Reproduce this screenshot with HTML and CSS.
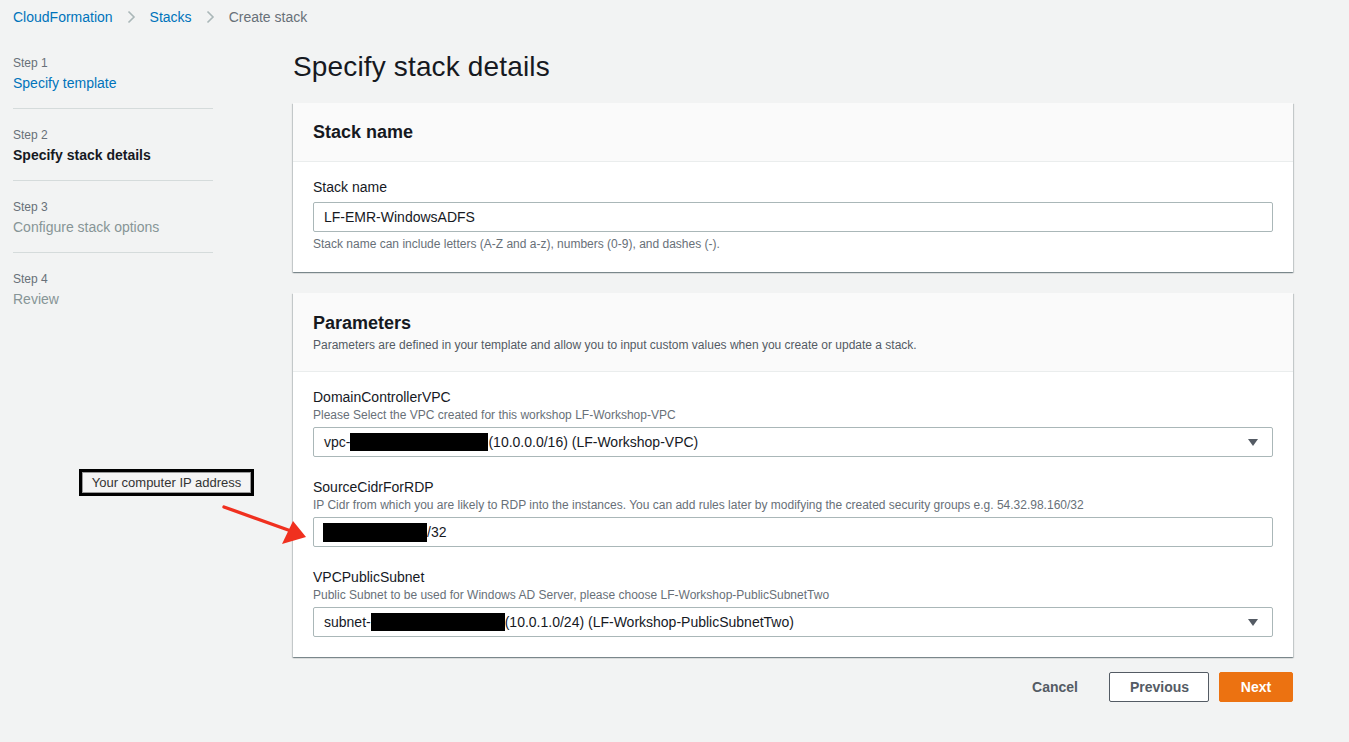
FILE: index.html
```html
<!DOCTYPE html>
<html lang="en">
<head>
<meta charset="utf-8">
<title>Create stack</title>
<link rel="stylesheet" href="styles.css">
</head>
<body>
<div class="page">
  <nav class="breadcrumb">
    <a class="crumb-link" href="#">CloudFormation</a>
    <svg class="chev" viewBox="0 0 9 14" width="9" height="14"><path d="M1.5 1.5 L7 7 L1.5 12.5" fill="none" stroke="#aab7b8" stroke-width="1.6"/></svg>
    <a class="crumb-link" href="#">Stacks</a>
    <svg class="chev" viewBox="0 0 9 14" width="9" height="14"><path d="M1.5 1.5 L7 7 L1.5 12.5" fill="none" stroke="#aab7b8" stroke-width="1.6"/></svg>
    <span class="crumb-current">Create stack</span>
  </nav>

  <div class="layout">
    <aside class="steps">
      <div class="step">
        <div class="step-num">Step 1</div>
        <a class="step-title link" href="#">Specify template</a>
      </div>
      <div class="step">
        <div class="step-num">Step 2</div>
        <div class="step-title current">Specify stack details</div>
      </div>
      <div class="step">
        <div class="step-num">Step 3</div>
        <div class="step-title disabled">Configure stack options</div>
      </div>
      <div class="step last">
        <div class="step-num">Step 4</div>
        <div class="step-title disabled">Review</div>
      </div>
    </aside>

    <main class="main">
      <h1 class="title">Specify stack details</h1>

      <section class="card card-first">
        <header class="card-head">
          <h2 class="card-title">Stack name</h2>
        </header>
        <div class="card-body">
          <div class="field">
            <div class="label">Stack name</div>
            <div class="input input-first">LF-EMR-WindowsADFS</div>
            <div class="hint">Stack name can include letters (A-Z and a-z), numbers (0-9), and dashes (-).</div>
          </div>
        </div>
      </section>

      <section class="card">
        <header class="card-head">
          <h2 class="card-title">Parameters</h2>
          <p class="card-desc">Parameters are defined in your template and allow you to input custom values when you create or update a stack.</p>
        </header>
        <div class="card-body">
          <div class="field">
            <div class="label">DomainControllerVPC</div>
            <div class="desc">Please Select the VPC created for this workshop LF-Workshop-VPC</div>
            <div class="input select"><span>vpc-<span class="redact r-vpc"></span>(10.0.0.0/16) (LF-Workshop-VPC)</span><span class="caret"></span></div>
          </div>
          <div class="field">
            <div class="label">SourceCidrForRDP</div>
            <div class="desc">IP Cidr from which you are likely to RDP into the instances. You can add rules later by modifying the created security groups e.g. 54.32.98.160/32</div>
            <div class="input input-cidr"><span class="redact r-ip"></span>/32</div>
          </div>
          <div class="field">
            <div class="label">VPCPublicSubnet</div>
            <div class="desc">Public Subnet to be used for Windows AD Server, please choose LF-Workshop-PublicSubnetTwo</div>
            <div class="input select"><span>subnet-<span class="redact r-subnet"></span>(10.0.1.0/24) (LF-Workshop-PublicSubnetTwo)</span><span class="caret"></span></div>
          </div>
        </div>
      </section>

      <div class="actions">
        <button class="btn btn-link">Cancel</button>
        <button class="btn btn-normal">Previous</button>
        <button class="btn btn-primary">Next</button>
      </div>
    </main>
  </div>

  <div class="note">Your computer IP address</div>
  <svg class="arrow" width="100" height="50" viewBox="0 0 100 50">
    <line x1="9" y1="7" x2="76" y2="31" stroke="#f0301f" stroke-width="3.4" stroke-linecap="round"/>
    <polygon points="91,37 67,44 78,21" fill="#f0301f"/>
  </svg>
</div>
</body>
</html>
```

FILE: styles.css
```css
* { box-sizing: border-box; }
html, body { margin: 0; padding: 0; }
body {
  background: #f2f3f3;
  font-family: "Liberation Sans", Arial, sans-serif;
  color: #16191f;
  font-size: 14px;
}
.page { position: relative; width: 1349px; min-height: 742px; }

.breadcrumb {
  display: flex;
  align-items: center;
  padding: 7px 0 22px 13px;
  height: 49px;
  line-height: 20px;
  font-size: 14px;
}
.crumb-link { color: #0073bb; text-decoration: none; }
.chev { margin: 0 14px 0 14px; display: block; }
.crumb-current { color: #687078; }

.layout { display: flex; padding-left: 13px; }
.steps { width: 200px; flex: none; padding-top: 6px; margin-right: 80px; }
.step { padding: 18px 0 14px; border-bottom: 1px solid #d5dbdb; }
.step:first-child { padding-top: 0; }
.step.last { border-bottom: none; }
.step-num { font-size: 12px; line-height: 16px; color: #687078; margin-bottom: 1px; }
.step-title { display: block; font-size: 14px; line-height: 22px; text-decoration: none; }
.step-title.link { color: #0073bb; }
.step-title.current { font-weight: bold; color: #16191f; }
.step-title.disabled { color: #879596; }

.main { width: 1000px; flex: none; }
.title {
  margin: 0 0 18px;
  font-size: 28px;
  line-height: 36px;
  font-weight: normal;
  color: #16191f;
  letter-spacing: 0.15px;
}

.card {
  background: #fff;
  box-shadow: 0 1px 1px 0 rgba(0,28,36,.3), 1px 1px 1px 0 rgba(0,28,36,.15), -1px 1px 1px 0 rgba(0,28,36,.15);
}
.card-first { margin-bottom: 21px; }
.card-head {
  background: #fafafa;
  border-bottom: 1px solid #eaeded;
  padding: 18px 20px 18px;
}
.card:not(.card-first) .card-head { padding-top: 19px; }
.card-title { margin: 0; font-size: 18px; line-height: 22px; font-weight: bold; }
.card-desc { margin: 3px 0 0; font-size: 12px; line-height: 16px; color: #545b64; }
.card-body { padding: 15px 20px 20px; }

.field + .field { margin-top: 20px; }
.label { font-size: 14px; line-height: 20px; color: #16191f; }
.desc { font-size: 12px; line-height: 16px; color: #687078; margin-bottom: 4px; }
.hint { font-size: 12px; line-height: 16px; color: #687078; margin-top: 4px; }

.input {
  height: 30px;
  border: 1px solid #aab7b8;
  border-radius: 2px;
  background: #fff;
  padding: 0 14px 0 10px;
  display: flex;
  align-items: center;
  font-size: 14px;
  color: #16191f;
}
.input-first { margin-top: 5px; }
.select { justify-content: space-between; }
.caret {
  width: 0; height: 0;
  border-left: 5px solid transparent;
  border-right: 5px solid transparent;
  border-top: 7px solid #545b64;
}
.redact { display: inline-block; background: #000; height: 18px; vertical-align: -4px; }
.r-vpc { width: 138px; }
.r-subnet { width: 134px; }
.input-cidr { padding-left: 9px; }
.r-ip { width: 104px; height: 19px; }

.actions {
  display: flex;
  justify-content: flex-end;
  gap: 10px;
  margin-top: 15px;
}
.btn {
  height: 30px;
  font-family: inherit;
  font-size: 14px;
  font-weight: bold;
  border-radius: 2px;
  padding: 0 20px;
  cursor: pointer;
  border: 1px solid transparent;
}
.btn-link { background: transparent; color: #545b64; }
.btn-normal { background: #fff; color: #545b64; border-color: #545b64; width: 100px; }
.btn-primary { background: #ec7211; border-color: #ec7211; color: #fff; width: 74px; }

.note {
  position: absolute;
  left: 79px;
  top: 469px;
  width: 175px;
  height: 27px;
  border: 3px solid #000;
  box-shadow: inset 0 0 0 1px #9a9a9a;
  background: #f4f4f4;
  font-family: "Liberation Sans", Arial, sans-serif;
  font-size: 13px;
  line-height: 21px;
  color: #333;
  text-align: center;
}
.arrow { position: absolute; left: 215px; top: 500px; }
```
